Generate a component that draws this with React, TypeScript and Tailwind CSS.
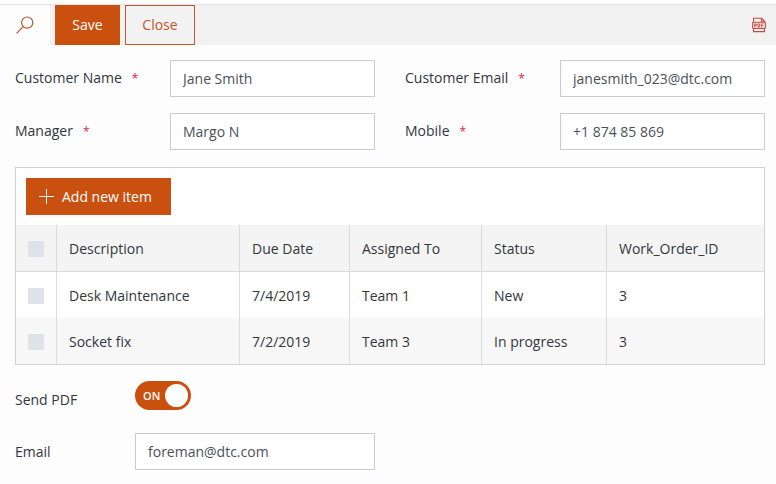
import { useState } from "react";
import type { ReactNode } from "react";

type Order = {
  description: string;
  dueDate: string;
  assignedTo: string;
  status: string;
  workOrderId: number;
};

const orders: Order[] = [
  { description: "Desk Maintenance", dueDate: "7/4/2019", assignedTo: "Team 1", status: "New", workOrderId: 3 },
  { description: "Socket fix", dueDate: "7/2/2019", assignedTo: "Team 3", status: "In progress", workOrderId: 3 },
];

const inputClass =
  "h-[37px] w-full min-w-0 border border-[#c9ccd2] bg-white px-3 text-[14px] leading-5 text-[#4c5058] outline-none focus:border-[#ca5010]";

function FormRow({ id, label, required, children }: { id: string; label: string; required?: boolean; children: ReactNode }) {
  return (
    <div className="grid grid-cols-[155px_1fr] items-center">
      <label htmlFor={id} className="text-[14px] leading-5">
        {label}
        {required && <span className="ml-2.5 text-[12px] text-[#e0244a]">*</span>}
      </label>
      {children}
    </div>
  );
}

function Tick({ label }: { label: string }) {
  return (
    <input
      type="checkbox"
      aria-label={label}
      className="block size-4 appearance-none bg-[#dfe2e9] checked:bg-[#ca5010]"
    />
  );
}

function SearchIcon() {
  return (
    <svg viewBox="0 0 18 18" className="size-[18px]" fill="none" stroke="#b9532a" strokeWidth="1.2" aria-hidden="true">
      <circle cx="11.2" cy="6.6" r="5.6" />
      <path d="M7.2 10.6 0.6 17.4" />
    </svg>
  );
}

function PdfIcon() {
  return (
    <svg viewBox="0 0 14 16" className="h-4 w-3.5" fill="none" stroke="#cb4a3e" strokeWidth="1.1" aria-hidden="true">
      <path d="M1.6 5V1.2H9.6L12.4 4V5" />
      <path d="M9.4 1.2V4.2H12.4" />
      <path d="M1.6 11.4V14.6H12.4V11.4" />
      <rect x="0.6" y="5.2" width="12.8" height="6.2" rx="0.6" />
      <path d="M2.6 10V6.9H4.4V8.6H2.8M5.9 6.9V9.7H7.6V6.9ZM9.3 10.1V6.9H11.5M9.3 8.5H11.2" strokeWidth="0.9" />
    </svg>
  );
}

function PlusIcon() {
  return (
    <svg viewBox="0 0 15 15" className="size-[15px]" fill="none" stroke="currentColor" aria-hidden="true">
      <path d="M7.5 0V15M0 7.5H15" />
    </svg>
  );
}

export default function App() {
  const [sendPdf, setSendPdf] = useState(true);

  return (
    <div className="min-h-screen bg-[#fdfdfd] pt-1 font-['Open_Sans','Noto_Sans',sans-serif] text-[14px] leading-5 text-[#33363c]">
      <header className="flex h-[41px] border-t border-[#e4e4e4] bg-[#f2f2f2]">
        <button type="button" aria-label="Search" className="flex w-[50px] items-center justify-center bg-[#fdfdfd]">
          <SearchIcon />
        </button>
        <div className="flex flex-1 gap-[5px] pl-[5px]">
          <button type="button" className="w-[65px] bg-[#ca5010] font-medium text-white">
            Save
          </button>
          <button type="button" className="w-[70px] border border-[#c0562c] text-[#c0562c]">
            Close
          </button>
        </div>
        <button type="button" aria-label="Export to PDF" className="px-2.5">
          <PdfIcon />
        </button>
      </header>

      <main className="flex flex-col gap-4 pt-[15px] pr-[11px] pb-3 pl-[15px]">
        <div className="grid grid-cols-2 gap-x-[30px] gap-y-4 pb-px">
          <FormRow id="customer" label="Customer Name" required>
            <input id="customer" className={inputClass} defaultValue="Jane Smith" />
          </FormRow>
          <FormRow id="customer-email" label="Customer Email" required>
            <input id="customer-email" type="email" className={inputClass} defaultValue="janesmith_023@dtc.com" />
          </FormRow>
          <FormRow id="manager" label="Manager" required>
            <input id="manager" className={inputClass} defaultValue="Margo N" />
          </FormRow>
          <FormRow id="mobile" label="Mobile" required>
            <input id="mobile" type="tel" className={inputClass} defaultValue="+1 874 85 869" />
          </FormRow>
        </div>

        <section className="border border-[#cfd1d4] bg-[#fefefe]">
          <div className="p-2.5">
            <button type="button" className="flex h-[37px] items-center gap-2 bg-[#ca5010] pr-[19px] pl-[13px] font-medium text-white">
              <PlusIcon />
              Add new item
            </button>
          </div>
          <table className="w-full table-fixed border-separate border-spacing-0 text-left">
            <colgroup>
              <col className="w-[41px]" />
              <col />
              <col className="w-[110px]" />
              <col className="w-[132px]" />
              <col className="w-[125px]" />
              <col className="w-[157px]" />
            </colgroup>
            <thead>
              <tr className="h-[47px] bg-[#f4f4f4] *:border-r *:border-b *:border-[#d9dadc] *:px-3 *:pt-0.5 *:font-normal *:last:border-r-0">
                <th scope="col">
                  <Tick label="Select all items" />
                </th>
                <th scope="col">Description</th>
                <th scope="col">Due Date</th>
                <th scope="col">Assigned To</th>
                <th scope="col">Status</th>
                <th scope="col">Work_Order_ID</th>
              </tr>
            </thead>
            <tbody>
              {orders.map((order) => (
                <tr
                  key={order.description}
                  className="h-[46px] even:bg-[#f7f7f7] *:border-r *:border-[#dcdddf] *:px-3 *:pt-0.5 *:last:border-r-0"
                >
                  <td>
                    <Tick label={"Select " + order.description} />
                  </td>
                  <td>{order.description}</td>
                  <td>{order.dueDate}</td>
                  <td>{order.assignedTo}</td>
                  <td>{order.status}</td>
                  <td>{order.workOrderId}</td>
                </tr>
              ))}
            </tbody>
          </table>
        </section>

        <div className="grid grid-cols-2 gap-x-[30px]">
          <div className="flex flex-col gap-[23px]">
            <div className="grid grid-cols-[120px_1fr] items-center">
              <label htmlFor="send-pdf" className="pt-2">
                Send PDF
              </label>
              <label className="flex h-[29px] w-14 cursor-pointer items-center justify-between rounded-full bg-[#ca5010] pr-[3px] pl-2 has-[input:not(:checked)]:flex-row-reverse">
                <input
                  id="send-pdf"
                  type="checkbox"
                  role="switch"
                  className="sr-only"
                  checked={sendPdf}
                  onChange={(event) => setSendPdf(event.target.checked)}
                />
                <span className="text-[11px] leading-4 font-semibold text-white">{sendPdf ? "ON" : "OFF"}</span>
                <span className="size-[23px] rounded-full bg-white" />
              </label>
            </div>
            <div className="grid grid-cols-[120px_1fr] items-center">
              <label htmlFor="email">Email</label>
              <input id="email" type="email" className={inputClass} defaultValue="foreman@dtc.com" />
            </div>
          </div>
        </div>
      </main>
    </div>
  );
}
